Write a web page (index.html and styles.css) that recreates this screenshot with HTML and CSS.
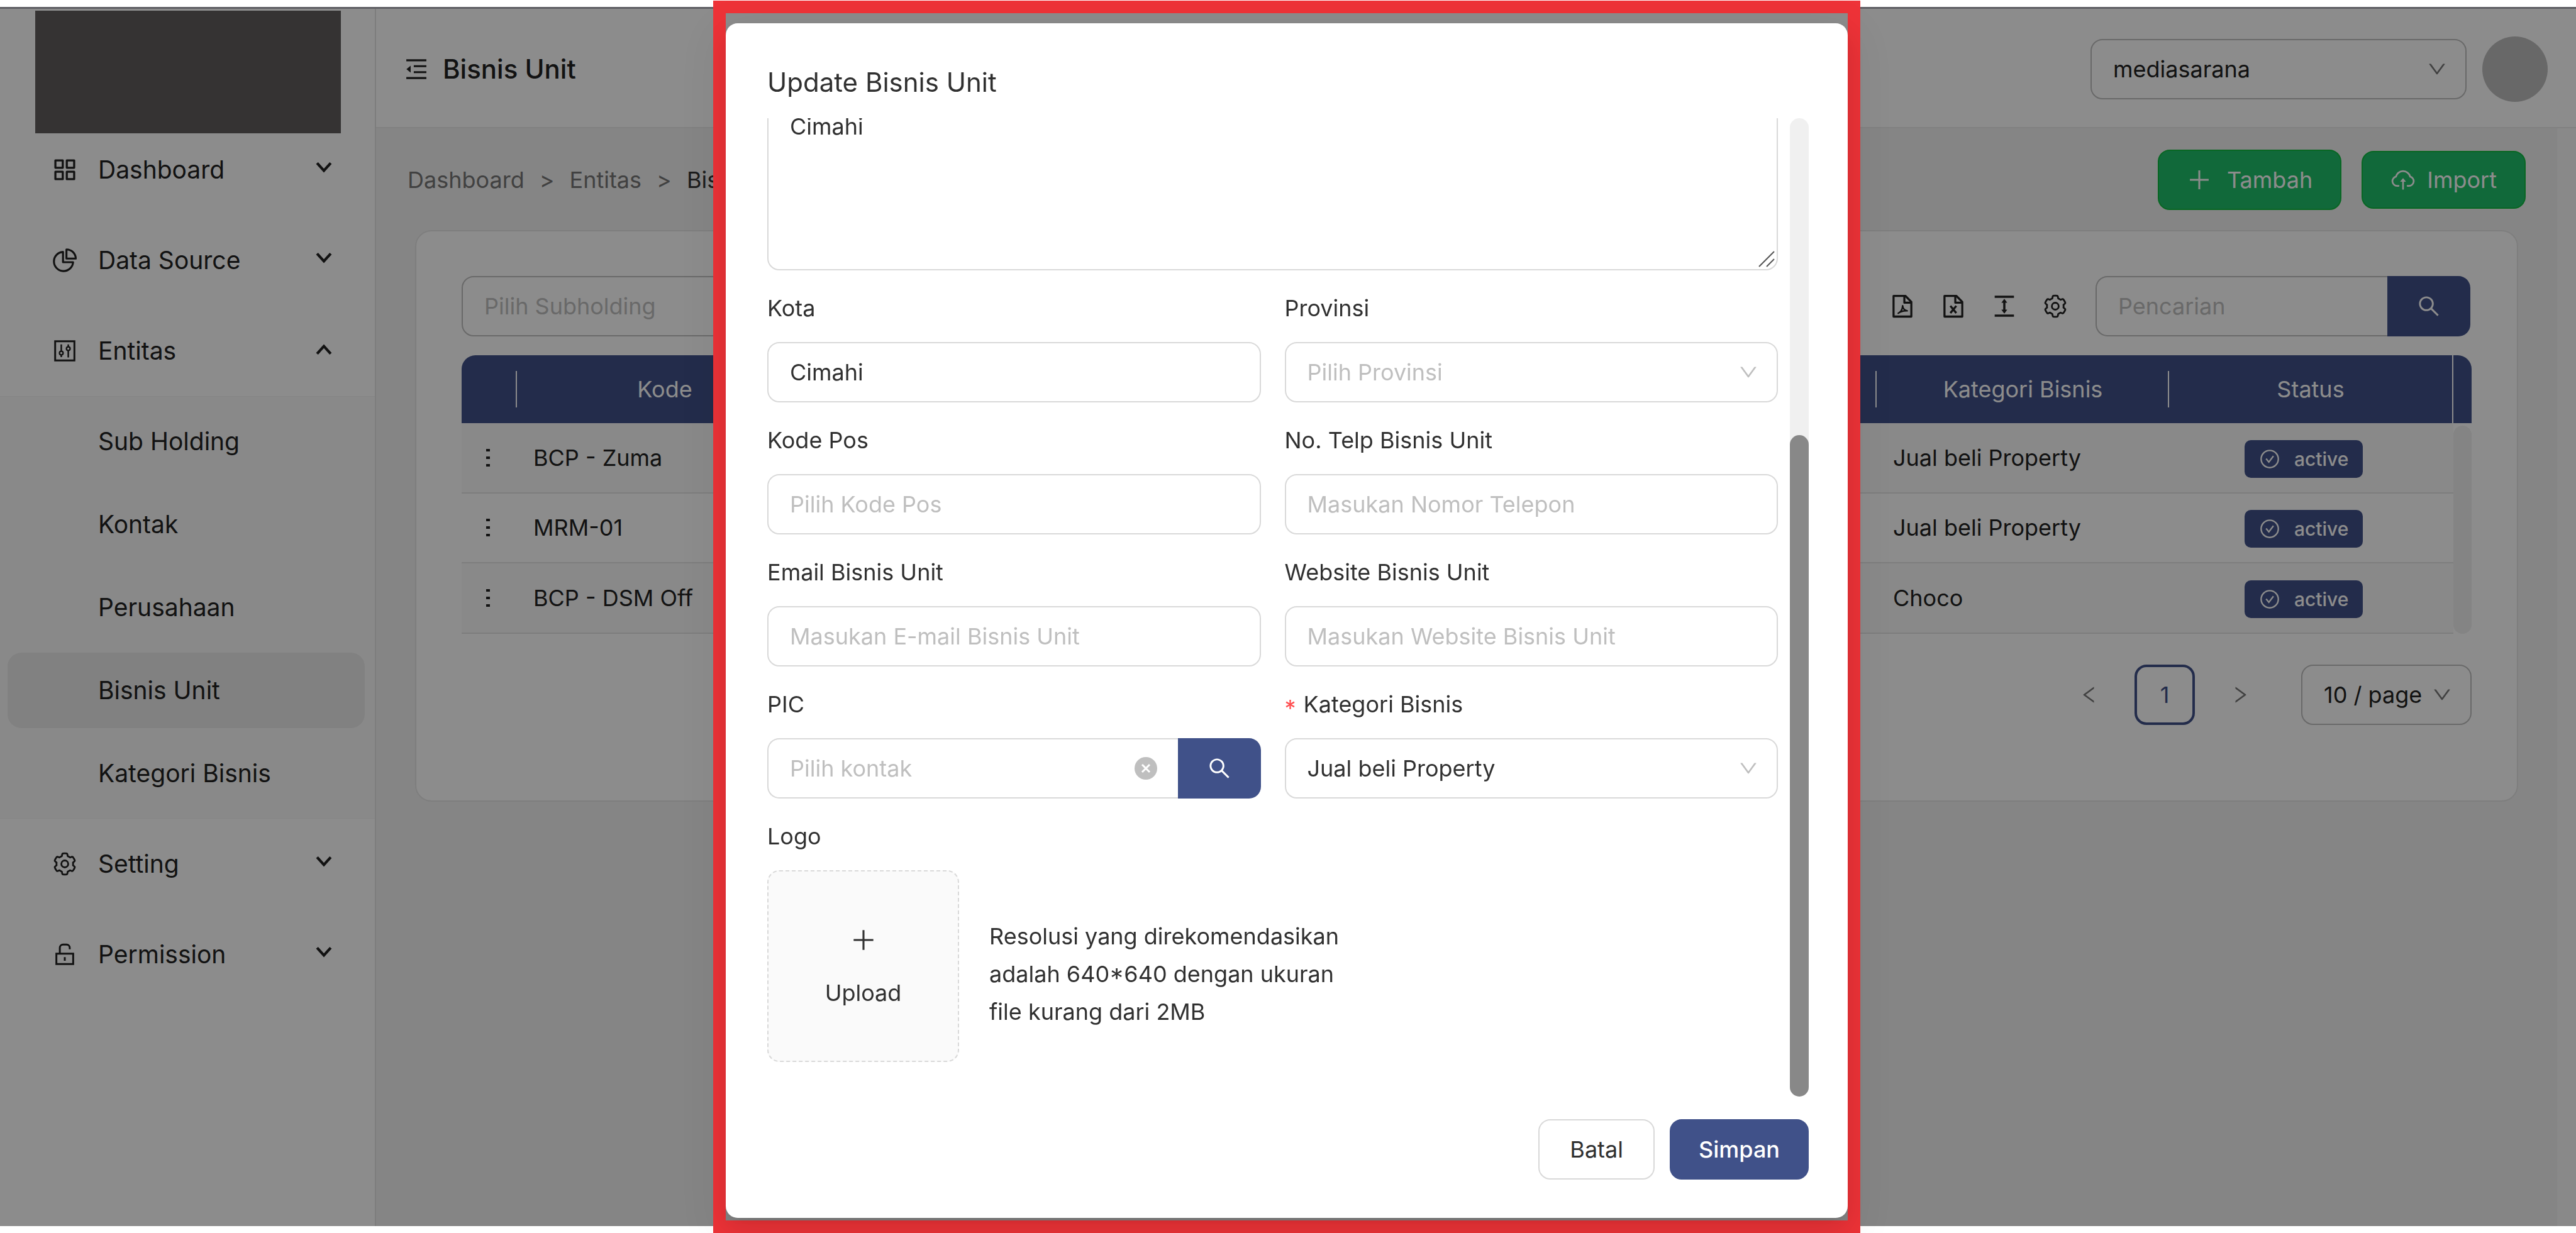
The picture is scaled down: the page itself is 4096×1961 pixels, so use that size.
FILE: index.html
```html
<!DOCTYPE html>
<html lang="id">
<head>
<meta charset="utf-8">
<title>Bisnis Unit</title>
<link rel="stylesheet" href="styles.css">
</head>
<body>
<svg class="sprite" aria-hidden="true">
  <symbol id="i-down" viewBox="0 0 1024 1024"><path fill="currentColor" d="M884 256h-75c-5.100 0-9.900 2.500-12.900 6.600L512 654.200 227.900 262.600c-3-4.100-7.800-6.600-12.900-6.600h-75c-6.500 0-10.300 7.400-6.500 12.700l352.600 486.100c12.800 17.600 39 17.600 51.700 0l352.600-486.100c3.900-5.300.1-12.700-6.400-12.700z"/></symbol>
  <symbol id="i-arrow" viewBox="0 0 24 20"><path fill="none" stroke="currentColor" stroke-width="4" d="M2 3l10 11L22 3"/></symbol>
  <symbol id="i-search" viewBox="0 0 1024 1024"><path fill="currentColor" d="M909.600 854.500L649.900 594.800C690.200 542.700 712 479 712 412c0-80.200-31.300-155.400-87.900-212.100-56.600-56.700-132-87.900-212.100-87.900s-155.500 31.300-212.100 87.900C143.200 256.500 112 331.800 112 412c0 80.100 31.300 155.500 87.900 212.100C256.500 680.800 331.800 712 412 712c67 0 130.600-21.800 182.700-62l259.700 259.600a8.200 8.200 0 0011.600 0l43.600-43.500a8.200 8.200 0 000-11.600zM570.400 570.400C528 612.700 471.800 636 412 636s-116-23.300-158.400-65.600C211.300 528 188 471.800 188 412s23.300-116.100 65.600-158.400C296 211.300 352.200 188 412 188s116.100 23.200 158.400 65.600S636 352.200 636 412s-23.300 116.100-65.600 158.400z"/></symbol>
  <symbol id="i-grid" viewBox="0 0 1024 1024"><g fill="none" stroke="currentColor" stroke-width="84" stroke-linejoin="round"><path d="M130 130h300v300H130zM594 130h300v300H594zM130 594h300v300H130zM594 594h300v300H594z"/></g></symbol>
  <symbol id="i-pie" viewBox="0 0 1024 1024"><g fill="none" stroke="currentColor" stroke-width="80" stroke-linejoin="round"><path d="M440 170A390 390 0 1 0 850 590H440z"/><path d="M580 70v370h380A380 380 0 0 0 580 70z"/></g></symbol>
  <symbol id="i-control" viewBox="0 0 1024 1024"><g fill="none" stroke="currentColor" stroke-width="76"><path d="M120 120h784v784H120z"/><path d="M370 250v260M370 690v80M654 250v90M654 500v280" stroke-width="64"/><circle cx="370" cy="600" r="74" stroke-width="60"/><circle cx="654" cy="424" r="74" stroke-width="60"/></g></symbol>
  <symbol id="i-gear" viewBox="-20 -20 1064 1064"><g fill="none" stroke="currentColor" stroke-width="76" stroke-linejoin="round"><path d="M924.800 625.700l-65.500-56c3.100-19 4.700-38.400 4.700-57.800s-1.600-38.800-4.700-57.800l65.500-56a32.030 32.030 0 009.300-35.200l-.9-2.600a443.740 443.740 0 00-79.700-137.900l-1.800-2.100a32.120 32.120 0 00-35.100-9.500l-81.300 28.900c-30-24.600-63.500-44-99.700-57.600l-15.700-85a32.050 32.050 0 00-25.800-25.700l-2.700-.5c-52.100-9.400-106.900-9.400-159 0l-2.700.5a32.050 32.050 0 00-25.800 25.700l-15.800 85.400a351.860 351.860 0 00-99 57.400l-81.900-29.100a32 32 0 00-35.100 9.500l-1.800 2.100a446.020 446.020 0 00-79.700 137.900l-.9 2.600c-4.500 12.500-.8 26.500 9.300 35.200l66.300 56.600c-3.100 18.800-4.600 38-4.600 57.100 0 19.200 1.500 38.400 4.600 57.100L99 625.500a32.030 32.030 0 00-9.300 35.200l.9 2.600c18.100 50.400 44.900 96.900 79.700 137.900l1.800 2.100a32.120 32.120 0 0035.100 9.500l81.900-29.100c29.800 24.500 63.100 43.900 99 57.400l15.800 85.400a32.050 32.050 0 0025.800 25.700l2.700.5a449.400 449.400 0 00159 0l2.700-.5a32.050 32.050 0 0025.800-25.700l15.700-85a350 350 0 0099.700-57.600l81.300 28.900a32 32 0 0035.100-9.500l1.800-2.100c34.800-41.100 61.600-87.500 79.700-137.900l.9-2.600c4.500-12.300.8-26.300-9.300-35z"/><circle cx="512" cy="512" r="145"/></g></symbol>
  <symbol id="i-unlock" viewBox="0 0 1024 1024"><g fill="none" stroke="currentColor" stroke-width="76"><path d="M170 480h684v424H170z"/><path d="M310 480V240a130 130 0 0 1 130-130h144a130 130 0 0 1 130 130v60M512 620v150"/></g></symbol>
  <symbol id="i-fold" viewBox="0 0 1024 1024"><g stroke="currentColor" stroke-width="80"><path d="M104 150h816M408 390h512M408 634h512M104 874h816"/></g><path fill="currentColor" d="M110 512l170-140v280z"/></symbol>
  <symbol id="i-plus" viewBox="0 0 1024 1024"><path stroke="currentColor" stroke-width="76" d="M512 130v764M130 512h764"/></symbol>
  <symbol id="i-cloud" viewBox="0 0 1024 1024"><g fill="none" stroke="currentColor" stroke-width="70" stroke-linecap="round"><path d="M330 756h-60A190 190 0 0 1 222 382a300 300 0 0 1 580 0A190 190 0 0 1 754 756h-60M512 880V520"/></g><path fill="currentColor" d="M512 440l120 150H392z"/></symbol>
  <symbol id="i-pdf" viewBox="0 0 1024 1024"><g fill="none" stroke="currentColor" stroke-width="84" stroke-linejoin="round"><path d="M150 90h480l244 244v600H150z"/><path d="M590 100v270h270"/><path d="M340 800c110-50 170-160 180-310 10 130 80 190 190 210-150-10-260 20-370 100z" stroke-width="60"/></g></symbol>
  <symbol id="i-xls" viewBox="0 0 1024 1024"><g fill="none" stroke="currentColor" stroke-width="84" stroke-linejoin="round"><path d="M150 90h480l244 244v600H150z"/><path d="M590 100v270h270M390 500l240 290M630 500L390 790"/></g></symbol>
  <symbol id="i-height" viewBox="0 0 1024 1024"><path stroke="currentColor" stroke-width="90" d="M120 130h784M120 894h784M512 300v424"/><path fill="currentColor" d="M512 210l120 160H392zM512 814l120-160H392z"/></symbol>
  <symbol id="i-check" viewBox="0 0 1024 1024"><g fill="none" stroke="currentColor" stroke-width="72"><circle cx="512" cy="512" r="412"/><path d="M340 500l130 160 220-290"/></g></symbol>
  <symbol id="i-clear" viewBox="0 0 36 36"><circle cx="18" cy="18" r="18" fill="#bfbfbf"/><path stroke="#fff" stroke-width="3" d="M12 12l12 12M24 12L12 24"/></symbol>
  <symbol id="i-dots" viewBox="0 0 6 28"><path fill="currentColor" d="M0 0h6v4H0zM0 12h6v4H0zM0 24h6v4H0z"/></symbol>
  <symbol id="i-grip" viewBox="0 0 26 26"><path stroke="#555" stroke-width="2" d="M1 25L25 1M13 25L25 13"/></symbol>
</svg>

<div class="app">
  <aside class="sidebar">
    <div class="logo"></div>
    <nav class="menu">
      <a class="menu-item" href="#"><svg class="icon"><use href="#i-grid"/></svg><span>Dashboard</span><svg class="caret"><use href="#i-arrow"/></svg></a>
      <a class="menu-item" href="#"><svg class="icon"><use href="#i-pie"/></svg><span>Data Source</span><svg class="caret"><use href="#i-arrow"/></svg></a>
      <a class="menu-item" href="#"><svg class="icon"><use href="#i-control"/></svg><span>Entitas</span><svg class="caret open"><use href="#i-arrow"/></svg></a>
      <div class="submenu">
        <a href="#">Sub Holding</a>
        <a href="#">Kontak</a>
        <a href="#">Perusahaan</a>
        <a class="active" href="#">Bisnis Unit</a>
        <a href="#">Kategori Bisnis</a>
      </div>
      <a class="menu-item" href="#"><svg class="icon"><use href="#i-gear"/></svg><span>Setting</span><svg class="caret"><use href="#i-arrow"/></svg></a>
      <a class="menu-item" href="#"><svg class="icon"><use href="#i-unlock"/></svg><span>Permission</span><svg class="caret"><use href="#i-arrow"/></svg></a>
    </nav>
  </aside>

  <div class="main">
    <header class="header">
      <svg class="icon"><use href="#i-fold"/></svg>
      <h1>Bisnis Unit</h1>
      <div class="field account">
        <select aria-label="Akun"><option>mediasarana</option></select>
        <svg class="chevron"><use href="#i-down"/></svg>
      </div>
      <div class="avatar"></div>
    </header>

    <div class="content">
      <div class="page">
        <div class="page-bar">
          <nav class="breadcrumb"><a href="#">Dashboard</a><span>&gt;</span><a href="#">Entitas</a><span>&gt;</span><span class="current">Bisnis Unit</span></nav>
          <button class="btn green" type="button"><svg class="icon"><use href="#i-plus"/></svg>Tambah</button>
          <button class="btn green import" type="button"><svg class="icon"><use href="#i-cloud"/></svg>Import</button>
        </div>

        <section class="card">
          <div class="toolbar">
            <div class="field subholding">
              <select class="empty" aria-label="Subholding"><option>Pilih Subholding</option></select>
              <svg class="chevron"><use href="#i-down"/></svg>
            </div>
            <div class="tools">
              <button type="button" aria-label="PDF"><svg class="icon"><use href="#i-pdf"/></svg></button>
              <button type="button" aria-label="Excel"><svg class="icon"><use href="#i-xls"/></svg></button>
              <button type="button" aria-label="Kepadatan"><svg class="icon"><use href="#i-height"/></svg></button>
              <button type="button" aria-label="Pengaturan"><svg class="icon"><use href="#i-gear"/></svg></button>
            </div>
            <div class="search">
              <input type="text" placeholder="Pencarian" aria-label="Pencarian">
              <button type="button" aria-label="Cari"><svg class="icon"><use href="#i-search"/></svg></button>
            </div>
          </div>

          <table class="table">
            <colgroup><col class="c-menu"><col class="c-code"><col><col class="c-cat"><col class="c-status"><col class="c-scroll"></colgroup>
            <thead><tr><th></th><th>Kode</th><th></th><th>Kategori Bisnis</th><th class="edge">Status</th><th></th></tr></thead>
            <tbody>
              <tr><td class="dots"><svg><use href="#i-dots"/></svg></td><td>BCP - Zuma</td><td></td><td>Jual beli Property</td><td class="status"><span class="tag"><svg><use href="#i-check"/></svg>active</span></td><td class="rail" rowspan="3"><div></div></td></tr>
              <tr><td class="dots"><svg><use href="#i-dots"/></svg></td><td>MRM-01</td><td></td><td>Jual beli Property</td><td class="status"><span class="tag"><svg><use href="#i-check"/></svg>active</span></td></tr>
              <tr><td class="dots"><svg><use href="#i-dots"/></svg></td><td>BCP - DSM Off</td><td></td><td>Choco</td><td class="status"><span class="tag"><svg><use href="#i-check"/></svg>active</span></td></tr>
            </tbody>
          </table>

          <div class="pagination">
            <button class="step prev" type="button" aria-label="Sebelumnya"><svg><use href="#i-down"/></svg></button>
            <button class="num" type="button">1</button>
            <button class="step next" type="button" aria-label="Berikutnya"><svg><use href="#i-down"/></svg></button>
            <div class="field size">
              <select aria-label="Baris per halaman"><option>10 / page</option></select>
              <svg class="chevron"><use href="#i-down"/></svg>
            </div>
          </div>
        </section>
      </div>
      <div class="gutter"></div>
    </div>
  </div>
  <div class="mask"></div>
</div>

<div class="overlay">
  <div class="frame">
    <form class="modal" role="dialog" aria-labelledby="modal-title">
      <h2 id="modal-title">Update Bisnis Unit</h2>
      <div class="modal-body">
        <div class="fields">
          <div class="area">
            <textarea aria-label="Alamat">Cimahi</textarea>
            <svg class="grip"><use href="#i-grip"/></svg>
          </div>
          <div class="item"><label for="kota">Kota</label><input id="kota" type="text" value="Cimahi"></div>
          <div class="item"><label for="prov">Provinsi</label><div class="field"><select id="prov" class="empty"><option>Pilih Provinsi</option></select><svg class="chevron"><use href="#i-down"/></svg></div></div>
          <div class="item"><label for="pos">Kode Pos</label><input id="pos" type="text" placeholder="Pilih Kode Pos"></div>
          <div class="item"><label for="telp">No. Telp Bisnis Unit</label><input id="telp" type="text" placeholder="Masukan Nomor Telepon"></div>
          <div class="item"><label for="email">Email Bisnis Unit</label><input id="email" type="text" placeholder="Masukan E-mail Bisnis Unit"></div>
          <div class="item"><label for="web">Website Bisnis Unit</label><input id="web" type="text" placeholder="Masukan Website Bisnis Unit"></div>
          <div class="item"><label for="pic">PIC</label><div class="search"><input id="pic" type="text" placeholder="Pilih kontak"><svg class="clear"><use href="#i-clear"/></svg><button type="button" aria-label="Cari kontak"><svg class="icon"><use href="#i-search"/></svg></button></div></div>
          <div class="item"><label for="kat"><span class="required">*</span>Kategori Bisnis</label><div class="field"><select id="kat"><option>Jual beli Property</option></select><svg class="chevron"><use href="#i-down"/></svg></div></div>
          <div class="item wide">
            <label for="upload">Logo</label>
            <div class="logo-row">
              <button id="upload" class="upload" type="button"><svg><use href="#i-plus"/></svg>Upload</button>
              <p>Resolusi yang direkomendasikan adalah 640*640 dengan ukuran file kurang dari 2MB</p>
            </div>
          </div>
        </div>
        <div class="scrollbar"><div class="thumb"></div></div>
      </div>
      <div class="modal-footer">
        <button class="btn" type="button">Batal</button>
        <button class="btn primary" type="submit">Simpan</button>
      </div>
    </form>
  </div>
</div>
</body>
</html>
```
FILE: styles.css
```css
* { box-sizing: border-box; }

:root {
  --navy: #405189;
  --line: #d9d9d9;
  --hint: #bfbfbf;
  --text: #222;
}

body {
  margin: 0;
  padding: 11px 0;
  background: #fff;
  color: var(--text);
  font: 36px/60px Inter, "Liberation Sans", sans-serif;
  overflow: hidden;
}

a { color: inherit; text-decoration: none; }
h1, h2, p { margin: 0; font-weight: 400; }
button, input, select, textarea { font: inherit; color: inherit; }
button { padding: 0; border: 0; background: none; display: flex; align-items: center; justify-content: center; }
svg { display: block; flex: none; }
.sprite { position: absolute; width: 0; height: 0; }
.icon { width: 40px; height: 40px; }

/* Controls */
input, select {
  display: block;
  width: 100%;
  height: 96px;
  padding: 0 34px;
  border: 2px solid var(--line);
  border-radius: 19px;
  background: #fff;
  appearance: none;
  outline: 0;
}
::placeholder { color: var(--hint); opacity: 1; }
select.empty { color: var(--hint); }
.field { position: relative; }
.chevron { position: absolute; right: 30px; top: 31px; width: 34px; height: 34px; color: var(--hint); }
.search { display: flex; position: relative; }
.search input { flex: 1; width: 0; border-right: 0; border-radius: 19px 0 0 19px; }
.search button { width: 132px; height: 96px; background: var(--navy); color: #fff; border-radius: 0 19px 19px 0; }
.btn {
  height: 96px;
  padding: 0 48px;
  border: 2px solid var(--line);
  border-radius: 19px;
  background: #fff;
}
.btn.primary { padding: 0 44px; background: var(--navy); border-color: var(--navy); color: #fff; font-weight: 500; }
.btn.green { gap: 24px; padding: 0 44px; background: #20bf6b; border-color: #10bb40; color: #fff; }

/* App shell */
.app {
  position: relative;
  display: flex;
  min-height: calc(100vh - 22px);
  border-top: 3px solid #adaeb6;
}
.mask { position: absolute; inset: -3px 0 0; background: rgba(0, 0, 0, .45); }
.sidebar { flex: none; width: 598px; border-right: 2px solid #e4e4e4; font-size: 39px; }
.logo { height: 195px; margin: 3px 54px -14px 56px; background: #625d5d; }
.menu-item { display: flex; align-items: center; height: 144px; padding: 0 68px 0 83px; }
.menu-item span { flex: 1; margin-left: 33px; }
.caret { width: 26px; height: 22px; margin-bottom: 6px; }
.caret.open { transform: rotate(180deg); }
.submenu { display: grid; gap: 12px; padding: 11px 16px 11px 12px; background: #fafafa; border: solid #f2f2f2; border-width: 1px 0; }
.submenu a { padding: 30px 144px; border-radius: 22px; }
.submenu .active { background: #ebebeb; }
.main { flex: 1; display: flex; flex-direction: column; min-width: 0; }
.header { display: flex; align-items: center; height: 190px; padding: 4px 45px 0 44px; border-bottom: 2px solid #ececec; }
.header h1 { flex: 1; margin-left: 22px; font-size: 42px; font-weight: 500; }
.account { width: 598px; margin-right: 25px; }
.account .chevron { color: #777; }
.avatar { width: 104px; height: 104px; border-radius: 50%; background: #bdbdbd; }
.content { flex: 1; display: flex; }
.page { flex: 1; min-width: 0; padding: 34px 50px; background: #f3f3f3; }
.gutter { width: 30px; background: #fafafa; }
.page-bar { display: flex; align-items: center; gap: 32px; margin-bottom: 32px; }
.breadcrumb { flex: 1; display: flex; gap: 24px; color: #777; }
.breadcrumb .current { color: #333; }
.import { height: 92px; }
.btn.import { gap: 18px; }

/* Card */
.card { margin: 0 12px; padding: 71px 72px 120px; background: #fff; border: 2px solid #e6e6e6; border-radius: 26px; }
.toolbar { display: flex; align-items: center; margin-bottom: 30px; padding-right: 2px; }
.subholding { width: 520px; }
.tools { flex: 1; display: flex; justify-content: flex-end; gap: 41px; margin-right: 44px; }
.toolbar .search { width: 596px; }
.toolbar input, .toolbar select, .pagination select, .account select { border-color: #bfbfbf; }

.table { width: 100%; table-layout: fixed; border-collapse: separate; border-spacing: 0; }
.c-menu { width: 88px; }
.c-code { width: 470px; }
.c-cat { width: 465px; }
.c-status { width: 452px; }
.c-scroll { width: 29px; }
th { position: relative; height: 108px; padding: 0; background: var(--navy); color: #fff; font-weight: 400; }
th:first-child { border-radius: 22px 0 0; }
th:last-child { border-radius: 0 22px 0 0; }
th:not(:last-child):not(.edge)::after { content: ""; position: absolute; right: 0; top: 25px; width: 2px; height: 58px; background: #fff; }
th.edge { border-right: 2px solid #fff; }
td { height: 111px; padding: 0 26px; border-bottom: 2px solid #e4e4e4; }
tbody tr:nth-child(odd) td { background: #f9f9f9; }
td.dots { padding: 0 0 0 39px; }
.dots svg { width: 6px; height: 28px; }
td.status { padding: 4px 24px 0 0; }
tbody tr td.rail { padding: 4px 0 0; border: 0; background: #fff; vertical-align: top; }
.rail div { height: 331px; border-radius: 15px; background: #f0f0f0; }
.tag { display: flex; align-items: center; gap: 22px; width: 188px; margin: 0 auto; padding: 0 23px; border-radius: 10px; background: var(--navy); color: #fff; font-size: 30px; font-weight: 500; }
.tag svg { width: 34px; height: 34px; }

.pagination { display: flex; align-items: center; justify-content: flex-end; margin-top: 49px; }
.pagination .step { width: 94px; height: 96px; color: #777; }
.step svg { width: 34px; height: 34px; }
.prev svg { transform: rotate(90deg); }
.next svg { transform: rotate(-90deg); }
.num { width: 96px; height: 96px; margin: 0 26px; border: 4px solid var(--navy); border-radius: 19px; color: var(--navy); }
.size { width: 271px; margin-left: 49px; }
.size select { padding-right: 70px; }
.size .chevron { color: #777; }

/* Dialog */
.overlay { position: fixed; inset: 0; display: flex; justify-content: center; padding: 1px 4px 0 0; }
.frame { display: flex; width: min(1824px, 100%); padding: 16px 0 4px; border: 20px solid #ee3338; }
.modal {
  flex: 1;
  display: flex;
  flex-direction: column;
  padding: 64px 62px 61px 66px;
  border-radius: 19px;
  background: #fff;
  color: #303030;
  box-shadow: 0 14px 38px rgba(0, 0, 0, .08), 0 7px 14px -9px rgba(0, 0, 0, .12), 0 22px 67px 19px rgba(0, 0, 0, .05);
}
.modal h2 { font-size: 42px; }
.modal-body { flex: 1; min-height: 0; display: flex; align-items: stretch; gap: 19px; margin: 27px 0 36px; overflow: hidden; }
.fields { flex: 1; display: grid; grid-template-columns: 1fr 1fr; gap: 30px 38px; align-self: flex-end; padding-bottom: 55px; }
.item label { display: flex; gap: 12px; margin-bottom: 24px; }
.area, .wide { grid-column: 1 / -1; }
.area { position: relative; }
.area textarea { display: block; width: 100%; height: 270px; padding: 9px 34px; border: 2px solid var(--line); border-radius: 19px; resize: none; outline: 0; }
.grip { position: absolute; right: 5px; bottom: 5px; width: 26px; height: 26px; }
.item .search input { padding-right: 90px; }
.clear { position: absolute; right: 165px; top: 30px; width: 36px; height: 36px; }
.required { height: 60px; padding-top: 6px; color: #ff4d4f; }
.logo-row { display: flex; align-items: center; gap: 48px; }
.upload { flex-direction: column; gap: 24px; width: 305px; height: 305px; border: 2px dashed var(--line); border-radius: 19px; background: #fafafa; }
.upload svg { width: 42px; height: 42px; margin: 9px; }
.logo-row p { width: 580px; padding-top: 24px; }
.scrollbar { width: 30px; display: flex; flex-direction: column; justify-content: flex-end; border-radius: 15px; background: #f0f0f0; }
.thumb { height: 67.6%; border-radius: 15px; background: #888; }
.modal-footer { display: flex; justify-content: flex-end; gap: 24px; }
```
